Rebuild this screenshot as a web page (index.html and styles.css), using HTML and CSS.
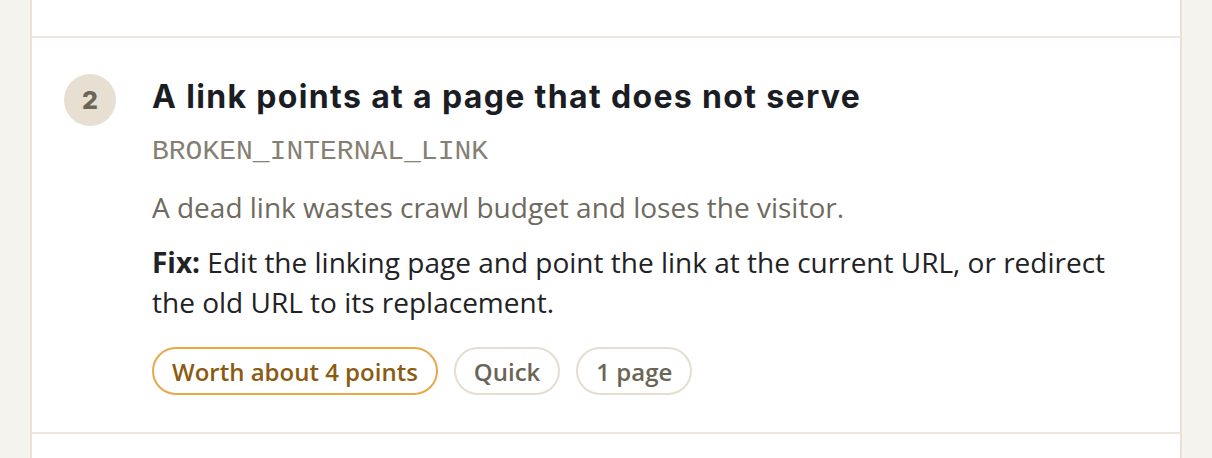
FILE: index.html
```html
<!DOCTYPE html>
<html lang="en">
<head>
<meta charset="utf-8">
<title>Issue</title>
<link rel="stylesheet" href="styles.css">
</head>
<body>
<div class="list">
  <div class="item item-prev"></div>
  <div class="item">
    <div class="num">2</div>
    <div class="content">
      <h3 class="title">A link points at a page that does not serve</h3>
      <div class="code">BROKEN_INTERNAL_LINK</div>
      <p class="desc">A dead link wastes crawl budget and loses the visitor.</p>
      <p class="fix"><strong>Fix:</strong> Edit the linking page and point the link at the current URL, or redirect the old URL to its replacement.</p>
      <div class="pills">
        <span class="pill pill-worth">Worth about 4 points</span>
        <span class="pill">Quick</span>
        <span class="pill">1 page</span>
      </div>
    </div>
  </div>
  <div class="item item-next"></div>
</div>
</body>
</html>
```
FILE: styles.css
```css
html, body {
  margin: 0;
  padding: 0;
  background: #f5f3ed;
}
body {
  padding: 0 30px;
  font-family: "Open Sans", "Liberation Sans", sans-serif;
}
.list {
  background: #ffffff;
  border-left: 2px solid #e9e1d5;
  border-right: 2px solid #e9e1d5;
}
.item {
  display: flex;
  align-items: flex-start;
  gap: 36px;
  padding: 36px 32px 37px 32px;
  border-top: 2px solid #ece6dc;
}
.item-prev {
  height: 36px;
  padding: 0;
  border-top: none;
}
.item-next {
  height: 30px;
  padding: 0;
}
.num {
  flex: none;
  width: 52px;
  height: 52px;
  border-radius: 50%;
  background: #e6dfd2;
  color: #6b6556;
  font-family: "Inter", "Open Sans", sans-serif;
  font-weight: 800;
  font-size: 25px;
  display: flex;
  align-items: center;
  justify-content: center;
}
.content {
  flex: 1;
  min-width: 0;
}
.title {
  margin: 0;
  font-family: "Inter", "Open Sans", sans-serif;
  font-weight: 700;
  font-size: 32px;
  line-height: 46px;
  color: #1b1d24;
  letter-spacing: 1.35px;
}
.code {
  margin-top: 14px;
  font-family: "Liberation Mono", "DejaVu Sans Mono", monospace;
  font-size: 28px;
  line-height: 36px;
  color: #857f74;
}
.desc {
  margin: 18px 0 0;
  font-size: 28px;
  line-height: 39px;
  color: #6f6a60;
}
.fix {
  margin: 15px 0 0;
  font-size: 28px;
  line-height: 40px;
  color: #222226;
}
.fix strong {
  font-weight: 700;
}
.pills {
  display: flex;
  gap: 16px;
  margin-top: 25px;
}
.pill {
  display: inline-flex;
  align-items: center;
  height: 48px;
  box-sizing: border-box;
  padding: 0 18px;
  border: 2px solid #e5ddd0;
  border-radius: 24px;
  font-weight: 600;
  font-size: 24px;
  color: #6b6556;
}
.pill-worth {
  border-color: #e8a84a;
  color: #8b5b12;
}
```
